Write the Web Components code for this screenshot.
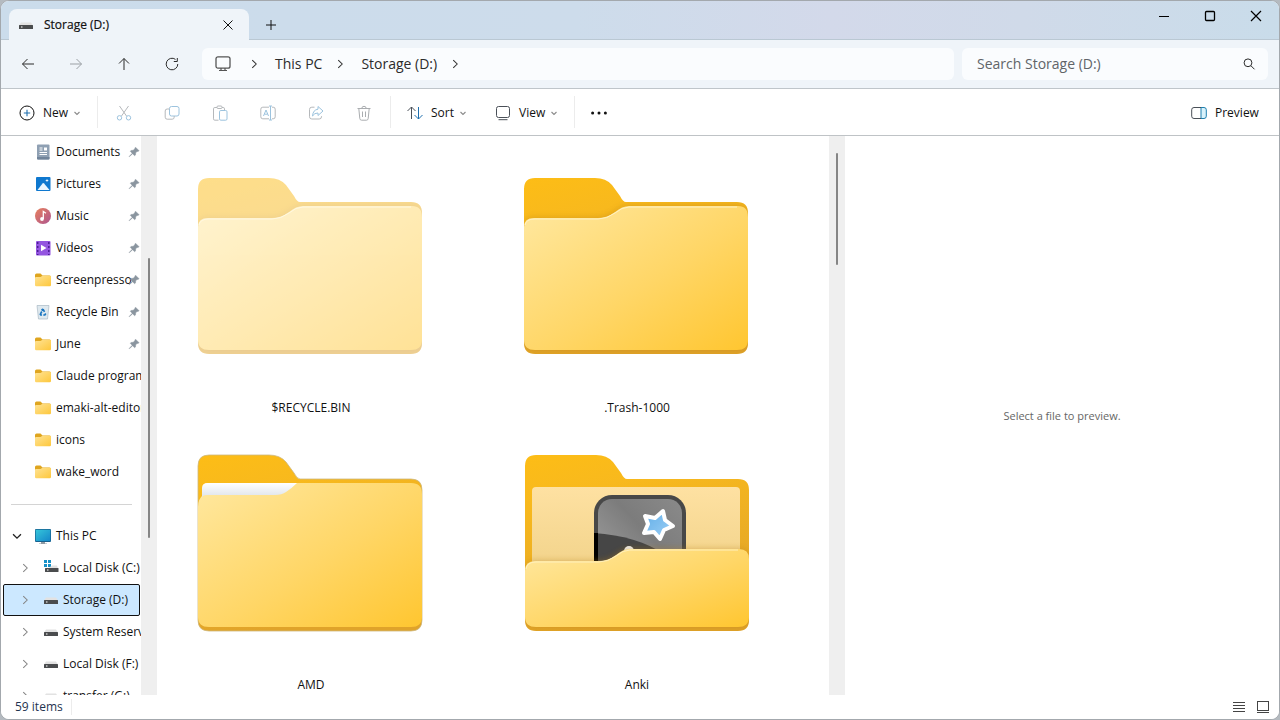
<!DOCTYPE html>
<html lang="en">
<head>
<meta charset="utf-8">
<meta name="viewport" content="width=device-width, initial-scale=1">
<title>Storage (D:)</title>
<style>
  html, body { margin: 0; height: 100%; background: #b4bac0; }
  body { font: 12px/16px "Open Sans", "Noto Sans", sans-serif; color: #111; }
</style>
</head>
<body>
<file-explorer></file-explorer>

<script>
const folderSmall = `<path d="M0 3q0-1.500 1.500-1.500h4l2 2H14.500q1.500 0 1.500 1.500v3H0z" fill="#dfa51f"/><path d="M0 6q0-1 1-1h4.500l2-1.300H15q1 0 1 1V13q0 1.300-1.300 1.300H1.300Q0 14.300 0 13z" fill="url(#g)"/><defs><linearGradient id="g" x1="0" y1="0" x2="1" y2="1"><stop stop-color="#ffe394"/><stop offset="1" stop-color="#fdc73c"/></linearGradient></defs>`;
const drive = `<path d="M3 5.500h10l2 3H1z" fill="#e2e2e2"/><rect x="1" y="8" width="14" height="4" rx=".5" fill="#4a4c4e"/><path d="M3 10h1.500" stroke="#fff" stroke-width="1"/>`;
const chevRight = `<path d="M6 3.500 10.500 8 6 12.500" fill="none" stroke="currentColor" stroke-width="1.200"/>`;

const ICONS = {
  back: `<path d="M14 8H2.500M7.500 3 2.500 8l5 5" class="s"/>`,
  forward: `<path d="M2 8h11.500M8.500 3l5 5-5 5" class="s"/>`,
  up: `<path d="M8 14V2.500M3 7.500l5-5 5 5" class="s"/>`,
  refresh: `<path d="M13.800 8A5.800 5.800 0 1 1 11.500 3.400M13.300 2v3.500H9.800" class="s"/>`,
  close: `<path d="M3.500 3.500l9 9M12.500 3.500l-9 9" class="s"/>`,
  closeBig: `<path d="M3 3l10 10M13 3 3 13" class="s" stroke-width="1.200"/>`,
  plus: `<path d="M8 3v10M3 8h10" class="s"/>`,
  minimize: `<path d="M3 8.500h10" class="s"/>`,
  maximize: `<rect x="3.500" y="3.500" width="9" height="9" rx="1" class="s" stroke-width="1.300"/>`,
  monitor: `<rect x="1" y=".8" width="14" height="11.400" rx="2" class="s" stroke-width="1.300"/><path d="M6 12v2.500M10 12v2.500M4 14.500h8" class="s" stroke-width="1.200"/>`,
  chevRight,
  chevDown: `<path d="M3.500 6 8 10.500 12.500 6" fill="none" stroke="currentColor" stroke-width="1.500"/>`,
  chevSmall: `<path d="M5.500 7 8 9.500 10.500 7" fill="none" stroke="#8a8a8a" stroke-width="1.100"/>`,
  search: `<circle cx="7" cy="6.800" r="3.900" class="s"/><path d="M10 9.800l3.500 3.500" class="s"/>`,
  add: `<circle cx="8" cy="8" r="7" class="s" stroke="#4a5058"/><path d="M8 4.800v6.400M4.800 8h6.400" stroke="#1f6fae" stroke-width="1.100"/>`,
  cut: `<path d="M3.500 1l7 10M12.500 1l-7 10" stroke="#b5b8bb" class="n"/><circle cx="3.500" cy="12.800" r="2.200" stroke="#9cc3de" class="n"/><circle cx="12.500" cy="12.800" r="2.200" stroke="#9cc3de" class="n"/>`,
  copy: `<rect x="5.500" y="1.500" width="9.500" height="9.500" rx="2" stroke="#9cc3de" class="n"/><path d="M5.500 4H3.200Q1.200 4 1.200 6v6.200q0 2 2 2h5q2 0 2-2V11" stroke="#b5b8bb" class="n"/>`,
  paste: `<path d="M5 2.500H2.800q-1.300 0-1.300 1.300v10q0 1.400 1.300 1.400H6.500M10 2.500h1.200q1.300 0 1.300 1.300V5" stroke="#b5b8bb" class="n"/><rect x="5" y="1" width="5" height="2.500" rx="1" stroke="#b5b8bb" class="n"/><rect x="7.500" y="5.500" width="7.500" height="9.700" rx="1.300" stroke="#9cc3de" class="n"/>`,
  rename: `<path d="M9 2.200H2.800q-2 0-2 2v7.600q0 2 2 2H9M12 2.200h1.200q2 0 2 2v7.600q0 2-2 2H12" stroke="#b5b8bb" class="n"/><path d="M3.500 11 6 5l2.500 6M4.500 9.200h3M10.500 1v14M9 1h3M9 15h3" stroke="#9cc3de" class="n"/>`,
  share: `<path d="M6.500 2.200H3.800q-2.300 0-2.300 2.300v7.200Q1.500 14 3.800 14h7.400q2.300 0 2.300-2.300V11" stroke="#b5b8bb" class="n"/><path d="M10 1.500 15 6l-5 4.500V8Q6.500 7.800 4.500 11 5 4.800 10 4.200z" stroke="#9cc3de" class="n"/>`,
  trash: `<path d="M1.500 3.500h13M5.800 3.500q0-2.200 2.200-2.200t2.200 2.200M2.800 3.500l1 10q.2 1.700 1.700 1.700h5q1.500 0 1.700-1.700l1-10M6.500 6.500v5.500M9.500 6.500v5.500" stroke="#aaadb0" class="n"/>`,
  sort: `<path d="M4.500 14V2M.5 6l4-4 4 4" stroke="#4a5058" class="n"/><path d="M11.500 2v12M7.500 10l4 4 4-4" stroke="#1f6fae" class="n"/>`,
  view: `<rect x="1.500" y="1.500" width="13" height="11" rx="2" stroke="#4a5058" class="n"/><path d="M3.500 14.700h9" stroke="#4a5058" class="n"/>`,
  more: `<circle cx="1.600" cy="8" r="1.500"/><circle cx="8" cy="8" r="1.500"/><circle cx="14.400" cy="8" r="1.500"/>`,
  preview: `<path d="M10 2.500h3q2.300 0 2.300 2.300v6.400q0 2.300-2.300 2.300h-3z" stroke="#1f7fae" fill="#d9f2fb"/><path d="M10 2.500H3Q.7 2.500.7 4.800v6.400q0 2.300 2.300 2.300h7" stroke="#4a5058" class="n"/>`,
  details: `<path d="M2 3.500h12M2 6.500h12M2 9.500h12M2 12.500h12" stroke="#444" class="n"/>`,
  large: `<rect x="2.500" y="2.500" width="11" height="9" stroke="#444" class="n"/><path d="M2 13.500h12" stroke="#444" class="n"/>`,
  pin: `<path d="M10 1.500 14.800 6.300 13.300 7.300 12 7.400 10.300 9 10 12 8.800 13 6.200 10.300 1.800 14.300 1.500 14 5.600 9.700 3 7 4 5.900 7 5.700 8.700 4z" fill="#8a959f" stroke="#8a959f" stroke-width=".6"/>`,
  folder: folderSmall,
  drive,
  osdrive: `<path d="M1 0h3v3H1zM5 0h3v3H5zM1 4h3v3H1zM5 4h3v3H5z" fill="#1791c8"/><path d="M9 5.500h5l1 3H5z" fill="#e2e2e2"/><rect x="2" y="8" width="13.500" height="4" rx=".5" fill="#4a4c4e"/><path d="M4 10h1.500" stroke="#fff"/>`,
  pc: `<rect width="16" height="13" rx="1" y="1" fill="#17618f"/><rect x=".7" y="1.700" width="14.600" height="11.300" rx=".5" fill="url(#p)"/><path d="M6 14h4v1.500h2v.5H4v-.5h2z" fill="#8f9aa3"/><defs><linearGradient id="p" x1="0" y1="0" x2="1" y2="1"><stop stop-color="#35c6da"/><stop offset="1" stop-color="#1587c9"/></linearGradient></defs>`,
  documents: `<rect x="2" y=".5" width="12.500" height="15" rx="1" fill="#8fa0b3"/><path d="M2 13h12.500v1.500q0 1-1 1H3q-1 0-1-1z" fill="#71849a"/><path d="M4.500 4h3M4.500 6h3M4.500 8.500h7.500M4.500 10.500h7.500" stroke="#fff"/><path d="M9 3.500h3v3H9z" fill="#fff"/>`,
  pictures: `<rect x="1" y="1" width="14.500" height="14" rx="1" fill="#0f78cf"/><path d="M2.500 14 7.500 7.500q.8-.8 1.600 0L14.500 14z" fill="#e9f6ff"/><path d="M12 2.700l.5 1.300 1.300.5-1.300.5-.5 1.300-.5-1.300-1.300-.5 1.300-.5z" fill="#fff"/>`,
  music: `<circle cx="8" cy="8" r="8" fill="url(#m)"/><circle cx="7" cy="11" r="1.900" fill="#fff"/><path d="M8.300 11V3.500l2.700 1.700" stroke="#fff" stroke-width="1.300" fill="none"/><defs><linearGradient id="m" x1="0" y1="0" x2="1" y2="1"><stop stop-color="#e8805c"/><stop offset="1" stop-color="#ad5590"/></linearGradient></defs>`,
  videos: `<rect x="1" y="1" width="14.500" height="14.500" rx="1" fill="#9455e0"/><path d="M2.700 2v13M13.800 2v13" stroke="#4c1d94" stroke-width="1.500" stroke-dasharray="2 2"/><path d="M6 4.800v6.400L11.500 8z" fill="#fff"/>`,
  bin: `<path d="M2 1.500h12L12.500 15h-9z" fill="#dfe9ef" stroke="#a9b9c4" stroke-width=".7"/><path d="M5.500 9.800 6.800 7.500M8 5.200l1.500 2.600M10.800 9.500 9.800 11H8.300M7 11H5.800L5 9.500M6.500 6.300 8 5" fill="none" stroke="#1b76c0" stroke-width="1.700"/>`
};

const define = (name, css, html) => customElements.define(name, class extends HTMLElement {
  connectedCallback() {
    if (this.shadowRoot) return;
    const root = this.attachShadow({ mode: "open" });
    const markup = typeof html === "function" ? html(this) : html;
    root.innerHTML = `<style>*{box-sizing:border-box}${css}</style>${markup}`;
  }
});

const BUTTON = `button{font:inherit;color:inherit;background:none;border:0;padding:0;margin:0;display:flex;align-items:center;justify-content:center}button:hover:not(:disabled){background:#0000000d}`;

define("fx-icon", `
  :host { display: block; flex: none; width: 16px; height: 16px; }
  svg { display: block; width: 100%; height: 100%; overflow: visible; }
  .s { fill: none; stroke: currentColor; } .n { fill: none; }`,
  el => `<svg viewBox="0 0 16 16" fill="currentColor" aria-hidden="true">${ICONS[el.getAttribute("name")]}</svg>`);

define("title-bar", `
  :host { display: flex; height: 39px; padding-left: 8px; border-bottom: 1px solid #bac8d3;
    background: linear-gradient(90deg, #cbdceb, #cddceb 45%, #d3d9ea 65%, #d0dae9 80%, #c9dcea); }
  ${BUTTON}
  .tab { display: flex; align-items: center; width: 240px; height: 31px; margin-top: 8px; padding: 0 13px 0 9px;
    border-radius: 8px 8px 0 0; background: #eff4f9; font-weight: 500; }
  .tab span { flex: 1; margin-left: 10px; -webkit-text-stroke: .2px currentColor; }
  .tab button { width: 16px; height: 24px; }
  .add { width: 32px; height: 24px; margin: 12px 0 0 6px; border-radius: 4px; }
  .controls { display: flex; margin-left: auto; color: #000; }
  .controls button { width: 46px; height: 29px; }`,
  `<div class="tab"><fx-icon name="drive"></fx-icon><span>Storage (D:)</span><button aria-label="Close tab"><fx-icon name="close"></fx-icon></button></div>
   <button class="add" aria-label="New tab"><fx-icon name="plus"></fx-icon></button>
   <div class="controls"><button aria-label="Minimize"><fx-icon name="minimize"></fx-icon></button><button aria-label="Maximize"><fx-icon name="maximize"></fx-icon></button><button aria-label="Close"><fx-icon name="closeBig"></fx-icon></button></div>`);

define("address-bar", `
  :host { display: flex; align-items: center; height: 49px; padding: 0 11px 0 7px; gap: 8px;
    background: #eff4f9; border-bottom: 1px solid #bfc5ca; font-size: 14px; line-height: 20px; color: #2b2b2b; }
  ${BUTTON}
  button { width: 40px; height: 32px; border-radius: 4px; }
  button:disabled { color: #9ba0a5; }
  nav, .search { display: flex; align-items: center; height: 32px; background: #fafcfe; border-radius: 6px; }
  nav { flex: 1; margin-left: 2px; padding-left: 13px; }
  nav > fx-icon { color: #555; }
  nav .c { width: 14px; height: 14px; color: #333; }
  nav a { color: inherit; text-decoration: none; margin: 0 11px 0 14px; }
  .first { margin-left: 16px; }
  .search { width: 306px; padding: 0 11px 0 15px; }
  input { flex: 1; min-width: 0; border: 0; padding: 0; background: none; outline: 0; font: inherit; color: #555; }
  input::placeholder { color: #606468; opacity: 1; }`,
  `<button aria-label="Back"><fx-icon name="back"></fx-icon></button>
   <button aria-label="Forward" disabled><fx-icon name="forward"></fx-icon></button>
   <button aria-label="Up"><fx-icon name="up"></fx-icon></button>
   <button aria-label="Refresh"><fx-icon name="refresh"></fx-icon></button>
   <nav aria-label="Address"><fx-icon name="monitor"></fx-icon><fx-icon name="chevRight" class="c first"></fx-icon><a href="#pc">This PC</a><fx-icon name="chevRight" class="c"></fx-icon><a href="#d">Storage (D:)</a><fx-icon name="chevRight" class="c"></fx-icon></nav>
   <div class="search"><input type="text" placeholder="Search Storage (D:)" aria-label="Search Storage (D:)"><fx-icon name="search"></fx-icon></div>`);

define("command-button", `
  :host { display: block; width: 48px; }
  :host([wide]) { width: 80px; } :host([end]) { width: 88px; margin-left: auto; }
  ${BUTTON}
  button { width: 100%; height: 32px; padding-top: 2px; border-radius: 4px; }
  :host([wide]) button, :host([end]) button { justify-content: flex-start; padding-left: 10px; gap: 8px; }
  .chev { margin-left: -7px; }`,
  el => `<button ${el.hasAttribute("off") ? "disabled" : ""} aria-label="${el.getAttribute("label") || el.textContent}"><fx-icon name="${el.getAttribute("icon")}"></fx-icon><slot></slot>${el.hasAttribute("wide") ? '<fx-icon class="chev" name="chevSmall"></fx-icon>' : ""}</button>`);

define("command-bar", `
  :host { display: flex; align-items: center; height: 47px; padding: 0 10px 0 8px; background: #fff; border-bottom: 1px solid #bfc3c6; }
  i { width: 1px; height: 32px; background: #ececec; margin: 0 2px 0 8px; }
  .b { margin: 0 6px 0 2px; } .v { margin-left: 8px; } .c { margin: 0 0 0 9px; }`,
  `<command-button wide icon="add">New</command-button><i></i>
   <command-button off icon="cut" label="Cut"></command-button><command-button off icon="copy" label="Copy"></command-button><command-button off icon="paste" label="Paste"></command-button><command-button off icon="rename" label="Rename"></command-button><command-button off icon="share" label="Share"></command-button><command-button off icon="trash" label="Delete"></command-button>
   <i class="b"></i><command-button wide icon="sort">Sort</command-button><command-button class="v" wide icon="view">View</command-button><i class="c"></i>
   <command-button icon="more" label="More"></command-button><command-button end icon="preview">Preview</command-button>`);

define("scroll-strip", `
  :host { display: flow-root; flex: none; width: 16px; background: #efefef; }
  div { width: 2px; height: var(--thumb); margin: var(--offset) auto 0; border-radius: 1px; background: #858585; }`, `<div></div>`);

define("nav-item", `
  :host { display: block; height: 32px; }
  a { display: flex; align-items: center; height: 32px; padding-left: 34px; color: #111; text-decoration: none; white-space: nowrap; overflow: hidden; }
  span { flex: 1; min-width: 0; margin-left: 5px; }
  .pin { width: 12px; height: 12px; margin-right: 1px; }
  .chev { width: 14px; height: 14px; color: #858585; margin-right: 11px; }
  :host([level="1"]) a { padding-left: 9px; } :host([level="1"]) .chev { color: #222; }
  :host([level="2"]) a { padding-left: 17px; } :host([level="2"]) span { margin-left: 4px; }
  :host([selected]) a { margin: 0 1px 0 2px; padding-left: 14px; border: 1px solid #111; border-radius: 2px; background: #cce8ff; }`,
  el => { const lv = el.getAttribute("level");
    return `<a href="#">${lv ? `<fx-icon class="chev" name="${lv === "1" ? "chevDown" : "chevRight"}"></fx-icon>` : ""}<fx-icon name="${el.getAttribute("icon")}"></fx-icon><span><slot></slot></span>${el.hasAttribute("pinned") ? '<fx-icon class="pin" name="pin"></fx-icon>' : ""}</a>`; });

define("nav-pane", `
  :host { display: flex; min-height: 0; overflow: hidden; }
  nav { flex: 1; min-width: 0; overflow: hidden; }
  hr { height: 1px; margin: 16px 9px 15px 10px; border: 0; background: #d4d4d4; }
  scroll-strip { --thumb: 50%; --offset: 122px; }`,
  `<nav aria-label="Folders">
    <nav-item icon="documents" pinned>Documents</nav-item><nav-item icon="pictures" pinned>Pictures</nav-item><nav-item icon="music" pinned>Music</nav-item><nav-item icon="videos" pinned>Videos</nav-item><nav-item icon="folder" pinned>Screenpresso</nav-item><nav-item icon="bin" pinned>Recycle Bin</nav-item><nav-item icon="folder" pinned>June</nav-item><nav-item icon="folder">Claude program</nav-item><nav-item icon="folder">emaki-alt-editor</nav-item><nav-item icon="folder">icons</nav-item><nav-item icon="folder">wake_word</nav-item>
    <hr>
    <nav-item level="1" icon="pc">This PC</nav-item><nav-item level="2" icon="osdrive">Local Disk (C:)</nav-item><nav-item level="2" icon="drive" selected>Storage (D:)</nav-item><nav-item level="2" icon="drive">System Reserv</nav-item><nav-item level="2" icon="drive">Local Disk (F:)</nav-item><nav-item level="2" icon="drive">transfer (G:)</nav-item>
   </nav><scroll-strip></scroll-strip>`);

const BACK = "M16 90V47Q16 36 27 36H87Q98 36 104 43L112 54Q115 60 118 60H229Q240 60 240 71V201Q240 212 229 212H27Q16 212 16 201Z";
const FRONT = "M16 85Q16 76 26 76H90Q99 76 107 70Q114 64 121 64H230Q240 64 240 75V198Q240 208 229 208H27Q16 208 16 198Z";
const HALF = "M16 152Q16 142 26 142H90Q99 142 107 136Q114 130 121 130H230Q240 130 240 140V198Q240 208 229 208H27Q16 208 16 198Z";
const defs = `<defs>
  <linearGradient id="b" x1="0" y1="0" x2=".3" y2="1"><stop stop-color="#fdbd16"/><stop offset=".25" stop-color="#f8b91d"/><stop offset="1" stop-color="#e0a32a"/></linearGradient>
  <linearGradient id="f" x1="0" y1="0" x2="1" y2="1"><stop stop-color="#ffe8a0"/><stop offset=".55" stop-color="#ffd666"/><stop offset="1" stop-color="#ffc630"/></linearGradient>
  <linearGradient id="w" x1="0" y1="0" x2="0" y2="1"><stop stop-color="#fff"/><stop offset="1" stop-color="#dde2e9"/></linearGradient>
  <linearGradient id="i" x1="0" y1="0" x2="0" y2="1"><stop stop-color="#fee1a2"/><stop offset="1" stop-color="#efd085"/></linearGradient>
  <linearGradient id="k" x1="0" y1="1" x2="1" y2="0"><stop stop-color="#a8a8a8"/><stop offset=".6" stop-color="#7c7c7c"/><stop offset="1" stop-color="#8a8a8a"/></linearGradient>
  <linearGradient id="t" x1="0" y1="0" x2="1" y2="1"><stop stop-color="#61aee8"/><stop offset="1" stop-color="#9fd0f5"/></linearGradient>
  <filter id="sh" x="-10%" y="-10%" width="120%" height="120%"><feGaussianBlur stdDeviation="3"/></filter>
  <clipPath id="cb"><path d="${BACK}"/></clipPath></defs>`;
const shadow = p => `<g clip-path="url(#cb)"><path d="${p}" fill="#b57d14" opacity=".45" filter="url(#sh)"/></g>`;
const front = p => `<path d="${p}" fill="url(#f)"/>`;
const ART = {
  plain: `<path d="${BACK}" fill="url(#b)"/>${shadow(FRONT)}${front(FRONT)}<path d="M17 83Q18 77 27 77H90Q99 77 107 71Q114 65 121 65H229" fill="none" stroke="#fff2c4" stroke-width="1"/>`,
  files: `<path d="${BACK}" fill="url(#b)" stroke="#cdb87e" stroke-width=".8"/>${front("M16 88Q16 80 21 76V68Q21 64 26 64H229Q240 64 240 75V198Q240 208 229 208H27Q16 208 16 198Z")}<path d="M20 75V69Q20 64 26 64H115Q109 70 104 73Q100 76 93 76H25Q20 76 20 79Z" fill="url(#w)"/>`,
  open: `<g transform="translate(1 0)"><path d="${BACK}" fill="url(#b)"/><rect x="23" y="68" width="208" height="100" rx="4" fill="url(#i)"/>
    <rect x="85" y="76" width="92" height="92" rx="18" fill="#484848"/><rect x="89" y="80" width="84" height="90" rx="14" fill="url(#k)"/>
    <path d="M85 114Q128 117 155 135V152H85z" fill="#464646"/><path d="M85 114h4v40h-4z" fill="#000"/><circle cx="120" cy="132" r="5" fill="#eee"/>
    <path d="M154 92 156 101 164 107 155 111 151 120 145 113 135 114 139 105 136 97 146 99Z" fill="url(#t)" stroke="#fff" stroke-width="4" stroke-linejoin="round"/>
    ${shadow(HALF)}${front(HALF)}<path d="M17 150Q18 143 27 143H90Q99 143 107 137Q114 131 121 131H229" fill="none" stroke="#fff0bd"/></g>`
};

define("folder-tile", `
  :host { display: block; }
  figure { margin: 0; display: grid; row-gap: 10px; justify-items: center; }
  svg { display: block; width: 256px; height: 248px; }
  :host([ghost]) svg { opacity: .5; }
  figcaption { padding-left: 2px; text-align: center; }`,
  el => `<figure><svg viewBox="0 0 256 248" aria-hidden="true">${defs}${ART[el.getAttribute("kind") || "plain"]}</svg><figcaption><slot></slot></figcaption></figure>`);

define("file-grid", `
  :host { display: flex; min-width: 0; min-height: 0; overflow: hidden; }
  .grid { flex: 1; min-width: 0; overflow: hidden; display: grid; grid-template-columns: repeat(auto-fill, 256px); gap: 3px 70px; align-content: start; padding: 6px 22px 0 25px; }
  scroll-strip { --thumb: 20%; --offset: 17px; }`,
  `<div class="grid"><slot></slot></div><scroll-strip></scroll-strip>`);

define("preview-pane", `
  :host { display: grid; place-items: center; font-size: 11px; color: #666; background: #fff; }`, `<slot></slot>`);

define("status-bar", `
  :host { display: flex; align-items: center; height: 24px; padding: 0 8px 0 14px; color: #1f3350; background: #fff; }
  ${BUTTON}
  .n { padding-right: 8px; border-right: 1px solid #ececec; }
  div { display: flex; gap: 8px; margin-left: auto; }`,
  `<span class="n"><slot></slot></span><div><button aria-label="Details view"><fx-icon name="details"></fx-icon></button><button aria-label="Large icons view"><fx-icon name="large"></fx-icon></button></div>`);

define("file-explorer", `
  :host { box-sizing: border-box; display: flex; flex-direction: column; height: 100vh; border: 1px solid #a3a8ad; border-radius: 9px; overflow: hidden; background: #fff; }
  title-bar, address-bar, command-bar, status-bar { flex: none; }
  main { flex: 1; min-height: 0; display: grid; grid-template-columns: 156px minmax(0, 1fr) 434px; grid-template-rows: minmax(0, 1fr); }`,
  `<title-bar></title-bar><address-bar></address-bar><command-bar></command-bar>
   <main><nav-pane></nav-pane>
   <file-grid><folder-tile ghost>$RECYCLE.BIN</folder-tile><folder-tile>.Trash-1000</folder-tile><folder-tile kind="files">AMD</folder-tile><folder-tile kind="open">Anki</folder-tile></file-grid>
   <preview-pane>Select a file to preview.</preview-pane></main>
   <status-bar>59 items</status-bar>`);
</script>
</body>
</html>
